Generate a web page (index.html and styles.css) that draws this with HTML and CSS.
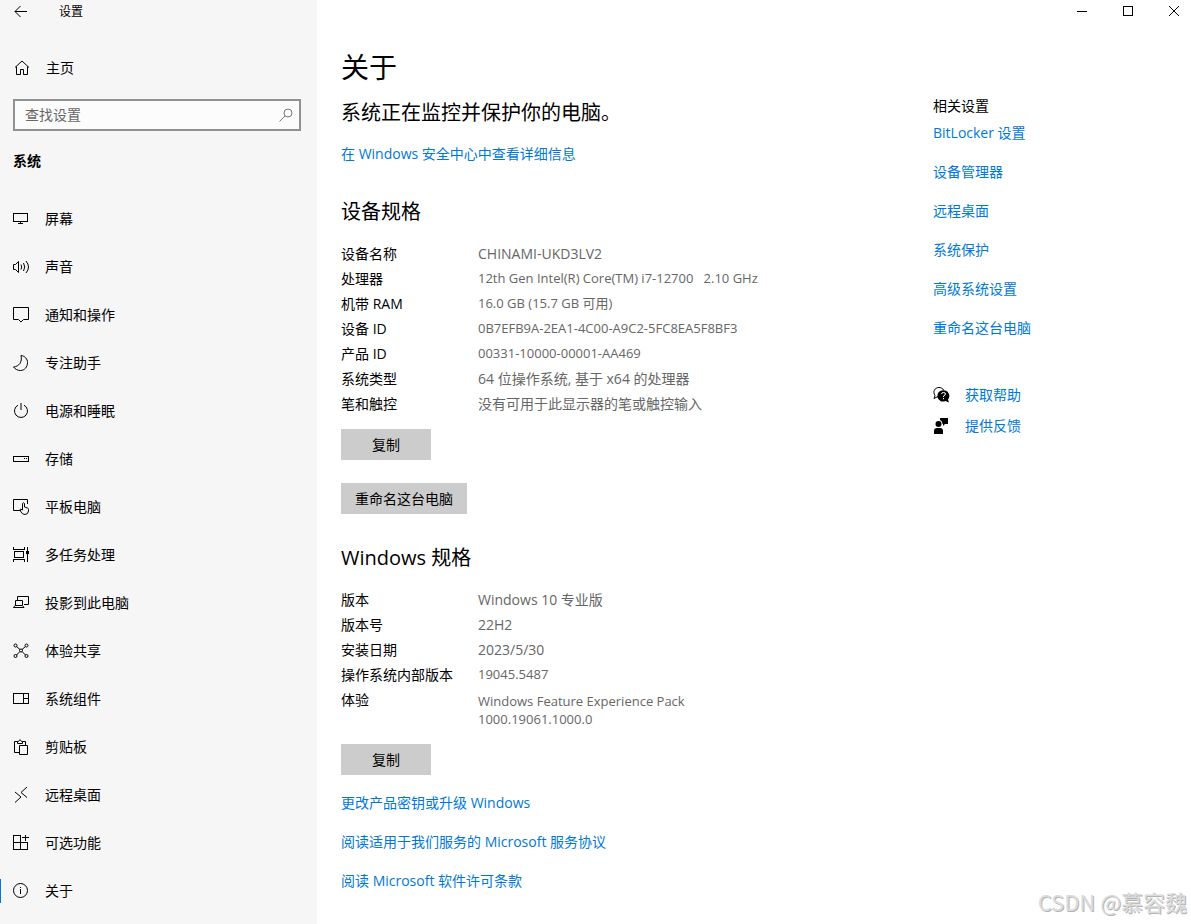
FILE: index.html
```html
<!DOCTYPE html>
<html lang="zh-CN">
  <head>
    <meta charset="UTF-8" />
    <meta name="viewport" content="width=device-width, initial-scale=1.0" />
    <title>设置</title>
    <link rel="stylesheet" href="styles.css">
  </head>
  <body>
    <div class="window">
      <aside class="sidebar">
        <div class="app-bar">
          <button type="button" class="back" aria-label="返回">
            <svg class="icon" viewBox="0 0 16 16"><path d="M2 7.5h12M7.5 2L2 7.5L7.5 13" /></svg>
          </button>
          <span class="app-title">设置</span>
        </div>
        <a class="home" href="#">
          <svg class="icon" viewBox="0 0 16 16"><path d="M2 7.5L9 1L16 7.5M3.5 6.5V14.5H7.5V9.5H10.5V14.5H14.5V6.5" /></svg>
          <span>主页</span>
        </a>
        <form class="search">
          <input type="search" placeholder="查找设置" aria-label="查找设置" />
          <button type="submit" aria-label="搜索">
            <svg class="icon" viewBox="0 0 16 16"><circle cx="10" cy="6" r="4" /><path d="M7 9L1.5 14.5" /></svg>
          </button>
        </form>
        <h2 class="category">系统</h2>
        <nav class="nav">
          <a href="#">
            <svg class="icon" viewBox="0 0 16 16"><path class="sharp" d="M.5 2.5h14v8H.5zM7.5 11v2M5 12.5h5" /></svg>
            <span>屏幕</span>
          </a>
          <a href="#">
            <svg class="icon" viewBox="0 0 16 16"><path d="M.5 5.5H2.5L5.5 2.5V13.5L2.5 10.5H.5zM8 5.5Q9.5 8 8 10.5M10.5 4Q13 8 10.5 12M13 2Q18 8 13 14" /></svg>
            <span>声音</span>
          </a>
          <a href="#">
            <svg class="icon" viewBox="0 0 16 16"><path d="M.5 .5h15v12h-5L8 15L5.5 12.5H.5z" /></svg>
            <span>通知和操作</span>
          </a>
          <a href="#">
            <svg class="icon" viewBox="0 0 16 16"><path d="M8 .5C12 1 14.5 4 14.5 7.5C14.5 12 11.5 15.5 7.5 15.5C4.5 15.5 2 14 .5 12C6 11.5 9.5 7 8 .5z" /></svg>
            <span>专注助手</span>
          </a>
          <a href="#">
            <svg class="icon" viewBox="0 0 16 16"><path d="M5 2.2A6.5 6.5 0 1 0 11 2.2M8 0V7" /></svg>
            <span>电源和睡眠</span>
          </a>
          <a href="#">
            <svg class="icon" viewBox="0 0 16 16"><path class="sharp" d="M.5 5.5h15v5H.5zM11 7.5h1M13 7.5h1" /></svg>
            <span>存储</span>
          </a>
          <a href="#">
            <svg class="icon" viewBox="0 0 16 16"><path d="M7 11.5H.5V.5H14.5V5M9.5 11V4.5Q10.5 3 11.5 4.5V8L14.5 9Q15.5 9.3 15.5 10.5V12Q15 15.5 12 15.5Q9.5 15.5 8 13L7 10.5Q7.5 9.5 9.5 11" /></svg>
            <span>平板电脑</span>
          </a>
          <a href="#">
            <svg class="icon" viewBox="0 0 16 16"><path class="sharp" d="M.5 0V2.5H11.5V0M1.5 4.5h9v6h-9zM.5 15V12.5H11.5V15M14.5 0V4M14.5 7V15" /><rect class="solid" x="13" y="4" width="3" height="3" /></svg>
            <span>多任务处理</span>
          </a>
          <a href="#">
            <svg class="icon" viewBox="0 0 16 16"><path d="M4.5 5V1.5H15.5V9.5H11M2.5 10V5.5H9.5V10M2 10.5L.5 12.5H11L9.5 10.5z" /></svg>
            <span>投影到此电脑</span>
          </a>
          <a href="#">
            <svg class="icon" viewBox="0 0 16 16"><circle cx="8" cy="7.5" r="1.5" /><circle cx="2.5" cy="2.5" r="1.5" /><circle cx="13.5" cy="2.5" r="1.5" /><circle cx="2.5" cy="13" r="1.5" /><circle cx="13.5" cy="13" r="1.5" /><path d="M3.5 3.5L7 6.5M12.5 3.5L9 6.5M3.5 12L7 8.5M12.5 12L9 8.5" /></svg>
            <span>体验共享</span>
          </a>
          <a href="#">
            <svg class="icon" viewBox="0 0 16 16"><path class="sharp" d="M.5 2.5h15v10H.5zM10.5 2.5v10M10.5 7.5h5" /></svg>
            <span>系统组件</span>
          </a>
          <a href="#">
            <svg class="icon" viewBox="0 0 16 16"><path d="M6.5 13.5H1.5V2.5H4.5M9.5 2.5H12.5V6M4.5 4.5V2.5H5.5Q7 -1 8.5 2.5H9.5V4.5zM6.5 6.5h8v9h-8z" /></svg>
            <span>剪贴板</span>
          </a>
          <a href="#">
            <svg class="icon" viewBox="0 0 16 16"><path d="M2 5L8 10L2 15.5M14 0L8 5.5L14 10.5" /></svg>
            <span>远程桌面</span>
          </a>
          <a href="#">
            <svg class="icon" viewBox="0 0 16 16"><path class="sharp" d="M7.5 .5H.5V14.5H14.5V7.5H.5M7.5 .5V14.5M12.5 0V6M9 2.5H16" /></svg>
            <span>可选功能</span>
          </a>
          <a class="active" href="#" aria-current="page">
            <svg class="icon" viewBox="0 0 16 16"><circle cx="7.5" cy="7.5" r="7" /><path class="sharp" d="M7.5 4V5M7.5 6V11" /></svg>
            <span>关于</span>
          </a>
        </nav>
      </aside>

      <main class="main">
        <div class="window-controls">
          <button type="button" aria-label="最小化">
            <svg class="icon" viewBox="0 0 16 16"><path class="sharp" d="M3 8.5h10" /></svg>
          </button>
          <button type="button" aria-label="最大化">
            <svg class="icon" viewBox="0 0 16 16"><path class="sharp" d="M3.5 3.5h9v9h-9z" /></svg>
          </button>
          <button type="button" aria-label="关闭">
            <svg class="icon" viewBox="0 0 16 16"><path d="M3 3L13 13M13 3L3 13" /></svg>
          </button>
        </div>

        <div class="content">
          <div class="about">
            <h1>关于</h1>
            <p class="status">系统正在监控并保护你的电脑。</p>
            <a class="link" href="#">在 Windows 安全中心中查看详细信息</a>

            <h2 class="section-title">设备规格</h2>
            <table class="specs">
              <tr><th scope="row">设备名称</th><td>CHINAMI-UKD3LV2</td></tr>
              <tr><th scope="row">处理器</th><td class="compact">12th Gen Intel(R) Core(TM) i7-12700 &nbsp; 2.10 GHz</td></tr>
              <tr><th scope="row">机带 RAM</th><td class="compact">16.0 GB (15.7 GB 可用)</td></tr>
              <tr><th scope="row">设备 ID</th><td class="compact">0B7EFB9A-2EA1-4C00-A9C2-5FC8EA5F8BF3</td></tr>
              <tr><th scope="row">产品 ID</th><td class="compact">00331-10000-00001-AA469</td></tr>
              <tr><th scope="row">系统类型</th><td>64 位操作系统, 基于 x64 的处理器</td></tr>
              <tr><th scope="row">笔和触控</th><td>没有可用于此显示器的笔或触控输入</td></tr>
            </table>
            <div class="actions">
              <button type="button" class="btn">复制</button>
              <button type="button" class="btn">重命名这台电脑</button>
            </div>

            <h2 class="section-title">Windows 规格</h2>
            <table class="specs">
              <tr><th scope="row">版本</th><td>Windows 10 专业版</td></tr>
              <tr><th scope="row">版本号</th><td>22H2</td></tr>
              <tr><th scope="row">安装日期</th><td>2023/5/30</td></tr>
              <tr><th scope="row">操作系统内部版本</th><td class="compact">19045.5487</td></tr>
              <tr><th scope="row">体验</th><td class="compact multiline">Windows Feature Experience Pack<br />1000.19061.1000.0</td></tr>
            </table>
            <div class="actions">
              <button type="button" class="btn">复制</button>
            </div>
            <div class="links">
              <a class="link" href="#">更改产品密钥或升级 Windows</a>
              <a class="link" href="#">阅读适用于我们服务的 Microsoft 服务协议</a>
              <a class="link" href="#">阅读 Microsoft 软件许可条款</a>
            </div>
          </div>

          <aside class="related">
            <h2>相关设置</h2>
            <div class="related-links">
              <a class="link" href="#">BitLocker 设置</a>
              <a class="link" href="#">设备管理器</a>
              <a class="link" href="#">远程桌面</a>
              <a class="link" href="#">系统保护</a>
              <a class="link" href="#">高级系统设置</a>
              <a class="link" href="#">重命名这台电脑</a>
            </div>
            <div class="support">
              <a class="link" href="#">
                <svg class="icon" viewBox="0 0 16 16"><path d="M5 9.5L1 11.5L2 8.5C-.5 5 1.5 .5 6 .5C8 .5 10 1.5 10.5 3" /><path class="solid" d="M10.5 3.2A5.7 5.7 0 0 1 15 12.5L16 15.5L12.5 14A5.7 5.7 0 1 1 10.5 3.2z" /><path class="mark" d="M8.5 7Q8.5 5.5 10.5 5.5Q12.5 5.5 12.5 7Q12.5 8 10.5 9V10M10.5 11V12.2" /></svg>
                <span>获取帮助</span>
              </a>
              <a class="link" href="#">
                <svg class="icon" viewBox="0 0 16 16"><path class="solid" d="M7 0H15V6H12L10 8V6H9.5Q9.5 3 7 2zM1 16V13Q1 10 4 10H7Q10 10 10 13V16z" /><circle class="solid" cx="5.5" cy="6" r="3" /></svg>
                <span>提供反馈</span>
              </a>
            </div>
          </aside>
        </div>
      </main>
      <div class="watermark">CSDN @慕容魏</div>
    </div>
  </body>
</html>
```
FILE: styles.css
```css
* {
  box-sizing: border-box;
}

body {
  margin: 0;
  background-color: #fff;
  color: #000;
  font-family: "Open Sans", "Noto Sans CJK SC", sans-serif;
  font-size: 14px;
  line-height: 20px;
}

h1,
h2,
p {
  margin: 0;
  font-weight: 400;
}

a {
  color: inherit;
  text-decoration: none;
}

button,
input {
  font: inherit;
  color: inherit;
}

button {
  border: none;
  padding: 0;
  background: none;
}

.icon {
  display: block;
  flex: none;
  width: 16px;
  height: 16px;
  fill: none;
  stroke: #000;
  overflow: visible;
}

.icon .sharp {
  shape-rendering: crispEdges;
}

.icon .solid {
  fill: #000;
  stroke: none;
}

.icon .mark {
  stroke: #fff;
}

.window {
  position: relative;
  display: flex;
  min-height: 100vh;
}

/* Sidebar */
.sidebar {
  flex: none;
  width: 317px;
  background-color: #f6f6f6;
}

.app-bar {
  display: flex;
  align-items: center;
  gap: 30px;
  height: 24px;
  padding-left: 13px;
}

.app-title {
  font-size: 12px;
}

.home {
  display: flex;
  align-items: center;
  gap: 17px;
  height: 40px;
  margin-top: 24px;
  padding-left: 13px;
}

.search {
  display: flex;
  align-items: center;
  height: 32px;
  margin: 11px 16px 0 13px;
  padding: 0 5px 0 10px;
  border: 2px solid #919191;
  background-color: #fcfcfc;
}

.search input {
  flex: 1;
  min-width: 0;
  padding: 0;
  border: none;
  outline: none;
  background: none;
}

.search input::placeholder {
  color: #666;
}

.search .icon {
  stroke: #777;
}

.category {
  margin: 20px 0 24px;
  padding-left: 13px;
  font-size: 14px;
  font-weight: 700;
}

.nav a {
  position: relative;
  display: flex;
  align-items: center;
  gap: 16px;
  height: 48px;
  padding-left: 13px;
}

.nav .active::before {
  content: "";
  position: absolute;
  left: 0;
  width: 1px;
  height: 24px;
  background-color: #0078d7;
}

/* Main area */
.main {
  flex: 1;
  min-width: 0;
}

.window-controls {
  display: flex;
  justify-content: flex-end;
  gap: 12px;
}

.window-controls button {
  display: flex;
  align-items: center;
  justify-content: center;
  width: 34px;
  height: 22px;
}

.content {
  display: flex;
  padding: 27px 24px 24px;
}

.about {
  flex: none;
  width: 592px;
}

h1 {
  font-size: 28px;
  line-height: 36px;
}

.status,
.section-title {
  font-size: 20px;
  line-height: 28px;
}

.status {
  margin: 14px 0 17px;
}

.link {
  display: block;
  color: #0078d7;
}

.section-title {
  margin: 34px 0 15px;
}

.actions + .section-title {
  margin-top: 30px;
}

.specs {
  border-collapse: collapse;
  line-height: 25px;
}

.specs th,
.specs td {
  padding: 0;
  text-align: left;
  vertical-align: top;
  font-weight: 400;
}

.specs th {
  width: 137px;
}

.specs td {
  color: #666;
}

.specs .compact {
  font-size: 13px;
}

.specs .multiline {
  padding: 5px 0 3px;
  line-height: 18px;
}

.actions {
  display: flex;
  flex-direction: column;
  align-items: flex-start;
  gap: 23px;
  margin-top: 13px;
}

.btn {
  min-width: 90px;
  height: 31px;
  padding: 0 14px;
  background-color: #ccc;
}

.links,
.related-links {
  display: flex;
  flex-direction: column;
  gap: 19px;
}

.links {
  margin-top: 18px;
}

/* Related settings */
.related {
  padding-top: 47px;
}

.related h2 {
  margin-bottom: 7px;
  font-size: 14px;
}

.support {
  display: flex;
  flex-direction: column;
  gap: 11px;
  margin-top: 47px;
}

.support .link {
  display: flex;
  align-items: center;
  gap: 16px;
}

.watermark {
  position: absolute;
  right: 4px;
  bottom: 7px;
  color: #dcdcdc;
  font-family: "Noto Sans CJK SC", sans-serif;
  font-size: 22px;
  line-height: 32px;
  text-shadow: 1px 1px 0 #b4b4b4;
}
```
